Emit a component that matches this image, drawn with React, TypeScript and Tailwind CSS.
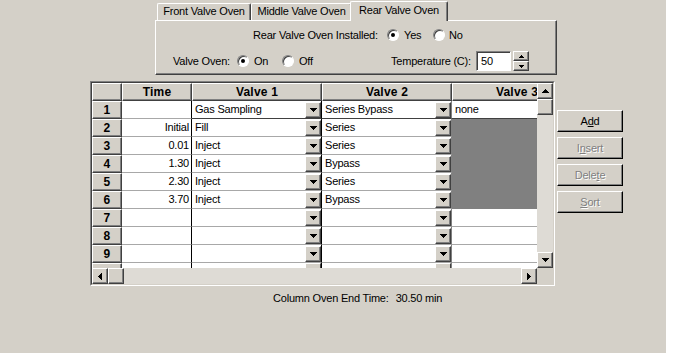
import React from "react";

const raised =
  "border border-t-white border-l-white border-r-[#404040] border-b-[#404040] shadow-[inset_-1px_-1px_0_#808080]";

type Dir = "up" | "down" | "left" | "right";

function Arrow({ dir, size = 4 }: { dir: Dir; size?: number }) {
  // pixel triangle: rows of 2n-1, 2n-3 ... 1
  const rects = [];
  for (let i = 0; i < size; i++) {
    const len = (size - i) * 2 - 1;
    if (dir === "down") rects.push(<rect key={i} x={i} y={i} width={len} height={1} />);
    if (dir === "up") rects.push(<rect key={i} x={i} y={size - 1 - i} width={len} height={1} />);
    if (dir === "right") rects.push(<rect key={i} x={i} y={i} width={1} height={len} />);
    if (dir === "left") rects.push(<rect key={i} x={size - 1 - i} y={i} width={1} height={len} />);
  }
  const horiz = dir === "up" || dir === "down";
  const w = horiz ? size * 2 - 1 : size;
  const h = horiz ? size : size * 2 - 1;
  return (
    <svg width={w} height={h} viewBox={`0 0 ${w} ${h}`} shapeRendering="crispEdges" className="block fill-black">
      {rects}
    </svg>
  );
}

function Radio({ on }: { on?: boolean }) {
  return (
    <span className="w-[12px] h-[12px] shrink-0 rounded-full bg-white border border-t-[#808080] border-l-[#808080] border-b-white border-r-white shadow-[inset_1px_1px_0_#404040] flex items-center justify-center">
      {on && <span className="w-[4px] h-[4px] rounded-full bg-black" />}
    </span>
  );
}

function Tab({ label, active }: { label: string; active?: boolean }) {
  if (active) {
    return (
      <div className="relative z-10 -ml-[2px] -mb-[1px] w-[98px] h-[20px] bg-[#d4d0c8] border-t border-l border-t-white border-l-white border-r border-r-[#404040] shadow-[inset_-1px_0_0_#808080] rounded-tl-[2px] rounded-tr-[2px] flex justify-center pt-[2px]">
        {label}
      </div>
    );
  }
  return (
    <div className="h-[17px] bg-[#d4d0c8] border-t border-l border-t-white border-l-white border-r border-r-[#404040] shadow-[inset_-1px_0_0_#808080] rounded-tl-[2px] rounded-tr-[2px] flex justify-center pt-[1px] px-[5px] whitespace-nowrap">
      {label}
    </div>
  );
}

type Row = { n: number; time?: string; v1?: string; v2?: string; v3?: string; dark?: boolean };

const rows: Row[] = [
  { n: 1, time: "", v1: "Gas Sampling", v2: "Series Bypass", v3: "none" },
  { n: 2, time: "Initial", v1: "Fill", v2: "Series", dark: true },
  { n: 3, time: "0.01", v1: "Inject", v2: "Series", dark: true },
  { n: 4, time: "1.30", v1: "Inject", v2: "Bypass", dark: true },
  { n: 5, time: "2.30", v1: "Inject", v2: "Series", dark: true },
  { n: 6, time: "3.70", v1: "Inject", v2: "Bypass", dark: true },
  { n: 7 },
  { n: 8 },
  { n: 9 },
];

function DropBtn() {
  return (
    <span className={`w-[16px] h-[16px] shrink-0 ${raised} bg-[#d4d0c8] flex items-center justify-center`}>
      <Arrow dir="down" />
    </span>
  );
}

function GridRow({ r }: { r: Row }) {
  const first = r.n === 1;
  return (
    <div className="flex h-[18px] shrink-0">
      <div className={`w-[30px] shrink-0 ${raised} bg-[#d4d0c8] flex items-center justify-center font-bold text-[12px] tracking-[0.2px]`}>
        {r.n}
      </div>
      <div className="w-[70px] shrink-0 bg-white border-r border-r-black border-b border-b-[#a8a8a8] flex items-center justify-end pr-[2px]">
        {r.time}
      </div>
      <div
        className={`w-[130px] shrink-0 bg-white border-r border-r-black border-b flex items-center ${
          first ? "border-b-[#404040]" : "border-b-[#a8a8a8]"
        }`}
      >
        <span className="flex-1 pl-[3px] whitespace-nowrap overflow-hidden">{r.v1}</span>
        <DropBtn />
      </div>
      <div
        className={`w-[130px] shrink-0 bg-white border-r border-r-[#808080] border-b flex items-center ${
          first ? "border-b-[#404040]" : "border-b-[#a8a8a8]"
        }`}
      >
        <span className="flex-1 pl-[3px] whitespace-nowrap overflow-hidden">{r.v2}</span>
        <DropBtn />
      </div>
      {r.dark ? (
        <div className="w-[130px] shrink-0 bg-[#808080]" />
      ) : (
        <div
          className={`w-[130px] shrink-0 bg-white border-b flex items-center pl-[3px] ${
            first ? "border-b-[#404040]" : "border-b-[#a8a8a8]"
          }`}
        >
          {r.v3}
        </div>
      )}
    </div>
  );
}

// last, partially visible row (row 10): only its top edge shows
function PartialRow() {
  return (
    <div className="flex h-[5px] shrink-0 overflow-hidden">
      <div className="w-[30px] shrink-0 border-t border-l border-t-white border-l-white border-r border-r-[#404040] shadow-[inset_-1px_0_0_#808080] bg-[#d4d0c8]" />
      <div className="w-[70px] shrink-0 bg-white border-r border-r-black" />
      <div className="w-[130px] shrink-0 bg-white border-r border-r-black flex justify-end">
        <span className="w-[16px] h-[5px] border-t border-l border-t-white border-l-white border-r border-r-[#404040] bg-[#d4d0c8]" />
      </div>
      <div className="w-[130px] shrink-0 bg-white border-r border-r-[#808080] flex justify-end">
        <span className="w-[16px] h-[5px] border-t border-l border-t-white border-l-white border-r border-r-[#404040] bg-[#d4d0c8]" />
      </div>
      <div className="w-[130px] shrink-0 bg-white" />
    </div>
  );
}

function SideButton({ children, disabled }: { children: React.ReactNode; disabled?: boolean }) {
  return (
    <div
      className={`w-[66px] h-[22px] bg-[#d4d0c8] border border-t-white border-l-white border-r-black border-b-black shadow-[inset_-1px_-1px_0_#808080] flex items-center justify-center ${
        disabled ? "text-[#808080] [text-shadow:1px_1px_0_#ffffff]" : "text-black"
      }`}
    >
      {children}
    </div>
  );
}

export default function App() {
  return (
    <div className="flex w-[694px] h-[353px] overflow-hidden font-['Liberation_Sans',Arial,sans-serif] text-[11px] leading-[13px] tracking-[-0.2px] text-black">
      <div className="w-[666px] h-full bg-[#d4d0c8] flex flex-col">
        {/* tab control */}
        <div className="ml-[155px] w-[402px] flex flex-col">
          <div className="flex items-end h-[20px] pl-[2px]">
            <div className="w-[94px]">
              <Tab label="Front Valve Oven" />
            </div>
            <div className="w-[101px]">
              <Tab label="Middle Valve Oven" />
            </div>
            <Tab label="Rear Valve Oven" active />
          </div>
          <div className="h-[55px] border-t border-l border-t-white border-l-white border-r border-b border-r-[#404040] border-b-[#404040] shadow-[inset_-1px_-1px_0_#808080] flex flex-col">
            <div className="flex items-center h-[14px] mt-[7px] ml-[97px]">
              <span className="w-[134px] whitespace-nowrap">Rear Valve Oven Installed:</span>
              <Radio on />
              <span className="w-[34px] pl-[5px]">Yes</span>
              <Radio />
              <span className="pl-[4px]">No</span>
            </div>
            <div className="flex items-center h-[20px] mt-[9px] ml-[17px]">
              <span className="w-[64px] whitespace-nowrap">Valve Oven:</span>
              <Radio on />
              <span className="w-[33px] pl-[5px]">On</span>
              <Radio />
              <span className="w-[97px] pl-[5px]">Off</span>
              <span className="w-[85px] whitespace-nowrap">Temperature (C):</span>
              <div className="w-[35px] h-[20px] bg-white border border-t-[#808080] border-l-[#808080] border-b-white border-r-white shadow-[inset_1px_1px_0_#404040] flex items-center pl-[4px]">
                50
              </div>
              <div className="ml-[2px] w-[16px] h-[20px] flex flex-col">
                <span className={`h-[10px] ${raised} bg-[#d4d0c8] flex items-center justify-center`}>
                  <Arrow dir="up" size={3} />
                </span>
                <span className={`h-[10px] ${raised} bg-[#d4d0c8] flex items-center justify-center`}>
                  <Arrow dir="down" size={3} />
                </span>
              </div>
            </div>
          </div>
        </div>

        {/* grid + buttons */}
        <div className="flex mt-[6px] ml-[90px]">
          <div className="w-[465px] h-[205px] border border-t-[#808080] border-l-[#808080] border-b-white border-r-white">
            <div className="w-full h-full border border-t-[#404040] border-l-[#404040] border-b-[#d4d0c8] border-r-[#d4d0c8] flex flex-col">
              <div className="flex h-[185px]">
                <div className="w-[445px] h-full overflow-hidden flex flex-col">
                  <div className="flex h-[18px] shrink-0 font-bold text-[12px] tracking-[0.2px]">
                    <div className={`w-[30px] shrink-0 ${raised} bg-[#d4d0c8]`} />
                    <div className={`w-[70px] shrink-0 ${raised} bg-[#d4d0c8] flex items-center justify-center`}>Time</div>
                    <div className={`w-[130px] shrink-0 ${raised} bg-[#d4d0c8] flex items-center justify-center`}>Valve 1</div>
                    <div className={`w-[130px] shrink-0 ${raised} bg-[#d4d0c8] flex items-center justify-center`}>Valve 2</div>
                    <div className={`w-[130px] shrink-0 ${raised} bg-[#d4d0c8] flex items-center justify-center`}>Valve 3</div>
                  </div>
                  {rows.map((r) => (
                    <GridRow key={r.n} r={r} />
                  ))}
                  <PartialRow />
                </div>
                <div className="w-[16px] h-full flex flex-col">
                  <span className={`h-[16px] shrink-0 ${raised} bg-[#d4d0c8] flex items-center justify-center`}>
                    <Arrow dir="up" />
                  </span>
                  <span className={`h-[16px] shrink-0 ${raised} bg-[#d4d0c8]`} />
                  <span className="flex-1 bg-[#dedbd5]" />
                  <span className={`h-[16px] shrink-0 ${raised} bg-[#d4d0c8] flex items-center justify-center`}>
                    <Arrow dir="down" />
                  </span>
                </div>
              </div>
              <div className="flex h-[16px]">
                <span className={`w-[16px] shrink-0 ${raised} bg-[#d4d0c8] flex items-center justify-center`}>
                  <Arrow dir="left" />
                </span>
                <span className={`w-[16px] shrink-0 ${raised} bg-[#d4d0c8]`} />
                <span className="flex-1 bg-[#dedbd5]" />
                <span className={`w-[16px] shrink-0 ${raised} bg-[#d4d0c8] flex items-center justify-center`}>
                  <Arrow dir="right" />
                </span>
                <span className="w-[16px] shrink-0 bg-[#d4d0c8]" />
              </div>
            </div>
          </div>
          <div className="ml-[2px] mt-[29px] flex flex-col gap-[5px]">
            <SideButton>
              A<u>d</u>d
            </SideButton>
            <SideButton disabled>
              I<u>n</u>sert
            </SideButton>
            <SideButton disabled>
              Dele<u>t</u>e
            </SideButton>
            <SideButton disabled>
              <u>S</u>ort
            </SideButton>
          </div>
        </div>

        <div className="ml-[273px] mt-[6px] flex whitespace-nowrap">
          <span>Column Oven End Time:</span>
          <span className="ml-[7px]">30.50 min</span>
        </div>
      </div>
      <div className="flex-1 h-full bg-white" />
    </div>
  );
}
